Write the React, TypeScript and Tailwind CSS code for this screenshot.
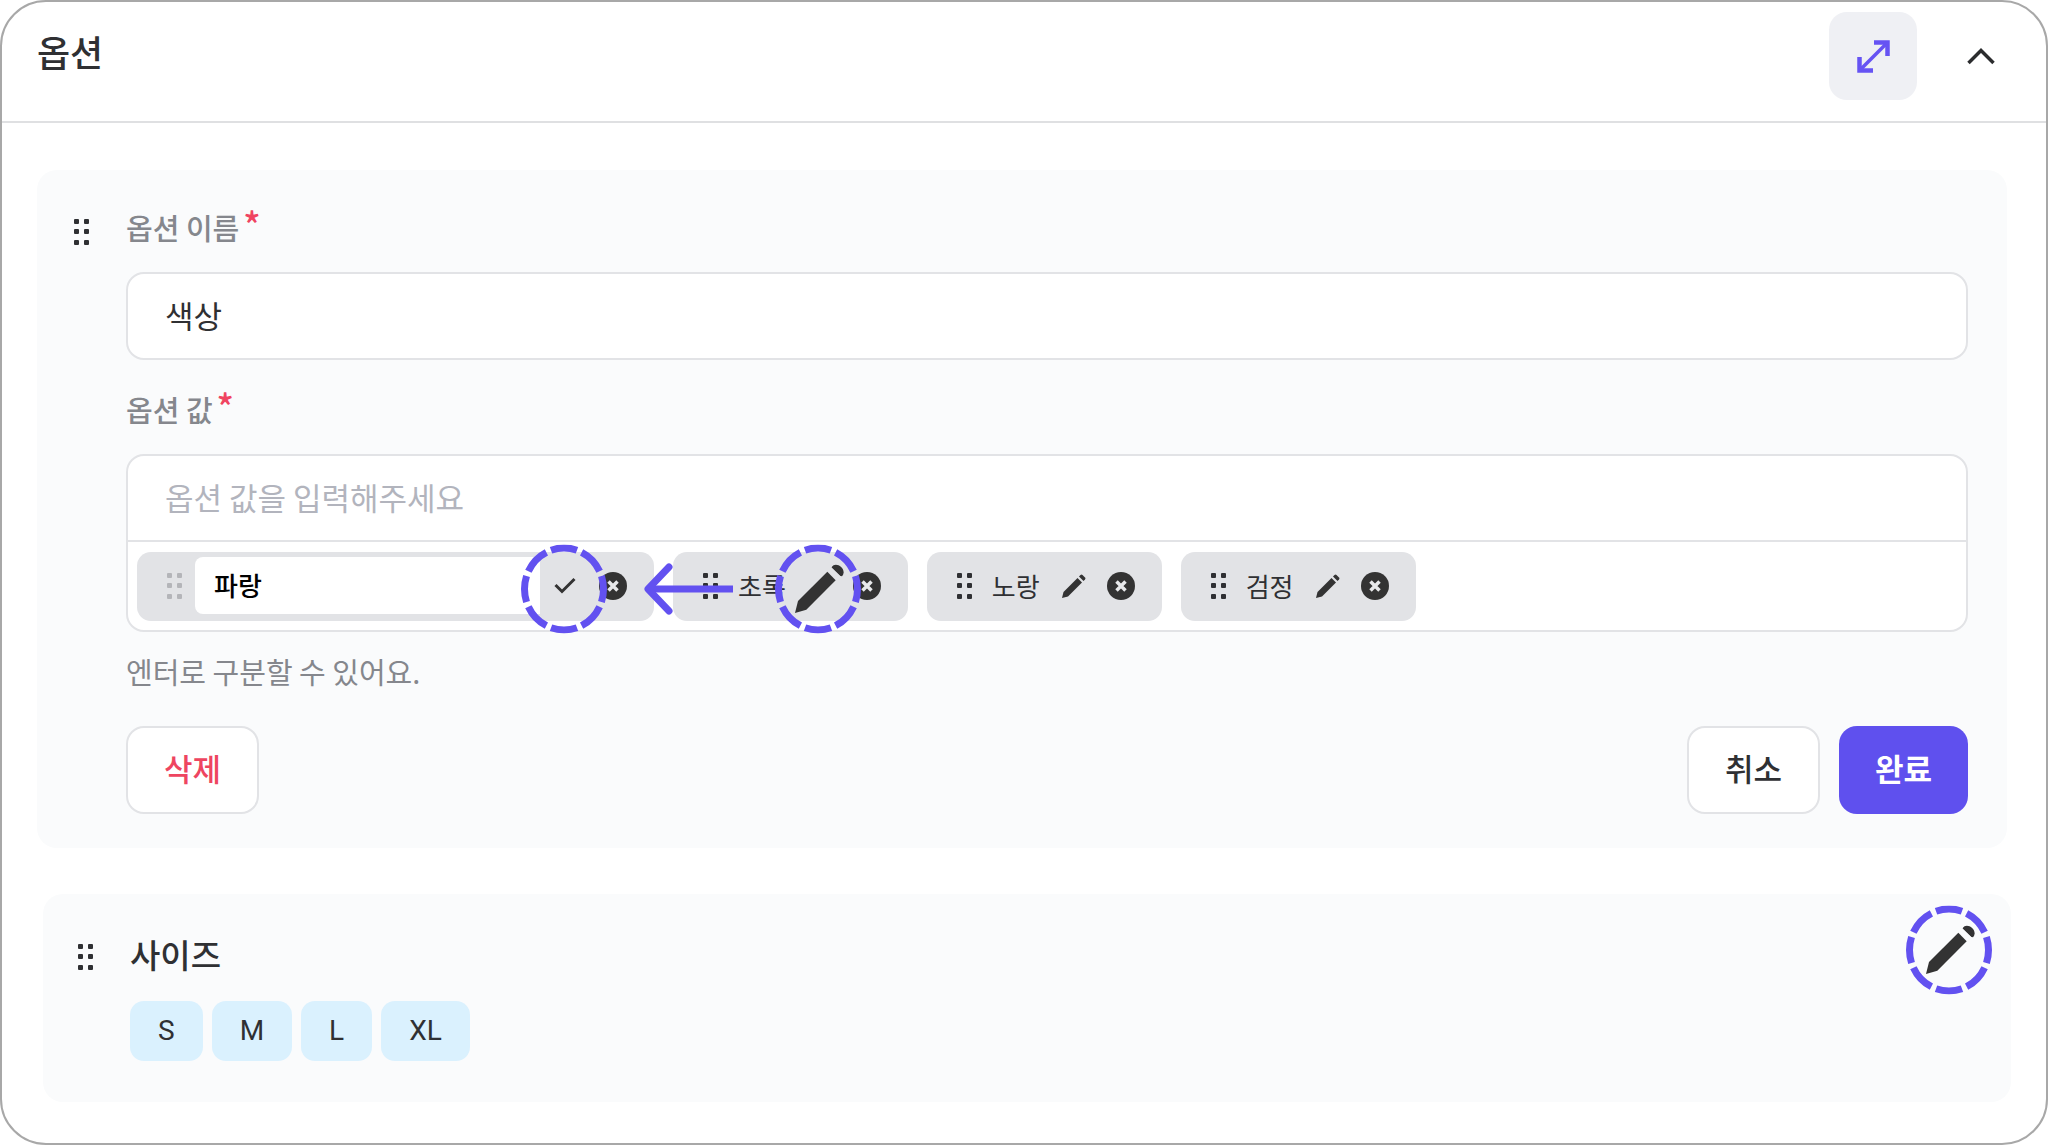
import type { ReactNode } from "react";

function Grip({ className = "text-[#2f3033]" }: { className?: string }) {
  return (
    <svg viewBox="0 0 15 28" className={`h-[28px] w-[15px] shrink-0 ${className}`} fill="currentColor" aria-hidden="true">
      {[1, 11, 22].map((y) => (
        <g key={y}>
          <rect x="0" y={y} width="5" height="5" rx="1" />
          <rect x="10" y={y} width="5" height="5" rx="1" />
        </g>
      ))}
    </svg>
  );
}

function Pencil({ className }: { className: string }) {
  return (
    <svg viewBox="-76 -80 156 156" className={className} fill="#333333" aria-hidden="true">
      <path d="M-67 70 L-58 34 L30 -54 L55 -28 L-33 60 Z" />
      <path d="M43 -67 A19 19 0 0 1 70 -41 Z" />
      <path d="M43 -67 C54 -88 92 -62 74 -40 L70 -41 Z" />
    </svg>
  );
}

function SmallPencil() {
  return (
    <svg viewBox="0 0 24 24" className="h-[24px] w-[24px]" fill="#333333" aria-hidden="true">
      <path d="M0 24 L1.5 18 L15.5 4 L20 8.500 L6 22.500 Z" />
      <path d="M17 2.500 L18.500 1 Q19.500 0 20.500 1 L23 3.500 Q24 4.500 23 5.500 L21.500 7 Z" />
    </svg>
  );
}

function Ring() {
  return (
    <svg
      viewBox="0 0 86 89"
      className="pointer-events-none absolute top-1/2 left-1/2 z-10 h-[89px] w-[86px] max-w-none -translate-x-1/2 -translate-y-1/2"
      fill="none"
      aria-hidden="true"
    >
      <ellipse
        cx="43"
        cy="44.500"
        rx="39.500"
        ry="41"
        stroke="#6251f0"
        strokeWidth="7"
        pathLength={80}
        strokeDasharray="8.4 1.6"
        strokeDashoffset="4.2"
      />
    </svg>
  );
}

function RemoveButton({ name, className }: { name: string; className: string }) {
  return (
    <button type="button" aria-label={`${name} 삭제`} className={`shrink-0 ${className}`}>
      <svg viewBox="0 0 28 28" className="h-[28px] w-[28px]" aria-hidden="true">
        <circle cx="14" cy="14" r="14" fill="#333333" />
        <path d="M9.500 9.500 L18.500 18.500 M18.500 9.500 L9.500 18.500" stroke="#e8e9eb" strokeWidth="3.500" />
      </svg>
    </button>
  );
}

function Chip({ name, highlighted = false }: { name: string; highlighted?: boolean }) {
  return (
    <li className="relative flex h-[69px] items-center rounded-[14px] bg-[#e2e3e6] pr-[27px] pb-[2px] pl-[30px]">
      <Grip />
      <span className="ml-[20px] text-[26px] leading-[38px] text-[#2f3033]">{name}</span>
      <button type="button" aria-label={`${name} 수정`} className="relative ml-[22px] h-[24px] w-[24px] shrink-0">
        {highlighted ? (
          <span className="absolute top-[15px] left-[10px]">
            <Ring />
            <Pencil className="absolute h-[52px] w-[52px] max-w-none -translate-x-1/2 -translate-y-1/2" />
          </span>
        ) : (
          <SmallPencil />
        )}
      </button>
      <RemoveButton name={name} className="ml-[21px]" />
      {highlighted && (
        <svg viewBox="0 0 90 52" className="pointer-events-none absolute top-[11px] -left-[30px] h-[52px] w-[90px]" fill="none" stroke="#6251f0" strokeWidth="7" aria-hidden="true">
          <path d="M90 26 H5" />
          <path d="M26 4 L5 26 L26 48" strokeLinecap="round" strokeLinejoin="round" />
        </svg>
      )}
    </li>
  );
}

function FieldLabel({ htmlFor, children }: { htmlFor: string; children: ReactNode }) {
  return (
    <label htmlFor={htmlFor} className="flex text-[29px] leading-[42px] font-medium text-[#85878d]">
      {children}
      <span className="-mt-[4px] ml-[4px] text-[36px] leading-[42px] text-[#f04461]">*</span>
    </label>
  );
}

const sizes = ["S", "M", "L", "XL"];

export default function App() {
  return (
    <main className="min-h-screen w-full rounded-[46px] border-2 border-[#a8a8a8] bg-white font-['Noto_Sans_CJK_KR',sans-serif] text-[#2f3033]">
      <header className="flex h-[121px] items-start justify-between border-b-2 border-[#dfe0e2] pt-[10px] pr-[51px] pl-[35px]">
        <h1 className="pt-[13px] text-[36px] leading-[52px] font-medium">옵션</h1>
        <div className="flex items-center gap-[50px]">
          <button type="button" aria-label="확대" className="flex h-[88px] w-[88px] items-center justify-center rounded-[18px] bg-[#eff0f4]">
            <svg viewBox="0 0 33 33" className="h-[33px] w-[33px]" aria-hidden="true">
              <g fill="none" stroke="#6653f3">
                <path d="M17 2.500 H30.500 V16 M2.500 17 V30.500 H16" strokeWidth="4.500" />
                <path d="M3 30 L30 3" strokeWidth="3.500" />
              </g>
              <path d="M24 2 H31 V9 Z M2 24 V31 H9 Z" fill="#6653f3" />
            </svg>
          </button>
          <button type="button" aria-label="접기">
            <svg viewBox="0 0 28 18" className="h-[18px] w-[28px]" fill="none" stroke="#2b2c2e" strokeWidth="3.500" aria-hidden="true">
              <path d="M1.500 16 L14 3.500 L26.500 16" />
            </svg>
          </button>
        </div>
      </header>

      <section className="mt-[47px] mr-[39px] ml-[35px] flex rounded-[20px] bg-[#fafbfc] pt-[36px] pr-[39px] pb-[34px] pl-[37px]">
        <button type="button" aria-label="옵션 순서 변경" className="mt-[12px] h-[28px] shrink-0">
          <Grip />
        </button>
        <form className="ml-[37px] min-w-0 flex-1">
          <FieldLabel htmlFor="option-name">옵션 이름</FieldLabel>
          <input
            id="option-name"
            defaultValue="색상"
            className="mt-[24px] block h-[88px] w-full rounded-[18px] border-2 border-[#e2e3e6] bg-white px-[37px] pb-[4px] text-[31px] outline-none"
          />
          <div className="mt-[28px]">
            <FieldLabel htmlFor="option-value">옵션 값</FieldLabel>
          </div>
          <div className="mt-[24px] rounded-[18px] border-2 border-[#e2e3e6] bg-white">
            <input
              id="option-value"
              placeholder="옵션 값을 입력해주세요"
              className="block h-[86px] w-full rounded-t-[16px] border-b-2 border-[#e2e3e6] bg-transparent px-[37px] pb-[4px] text-[31px] outline-none placeholder:text-[#b2b4bd]"
            />
            <ul className="flex flex-wrap gap-[19px] px-[9px] pt-[10px] pb-[9px]">
              <li className="flex h-[69px] items-center rounded-[14px] bg-[#e2e3e6] pr-[27px] pb-[2px] pl-[30px]">
                <Grip className="text-[#b4b5b9]" />
                <input
                  aria-label="옵션 값 수정"
                  defaultValue="파랑"
                  className="ml-[13px] h-[57px] w-[345px] rounded-l-[8px] bg-white px-[19px] pb-[2px] text-[26px] font-medium text-black outline-none"
                />
                <button type="button" aria-label="확인" className="relative ml-[14px] h-[24px] w-[22px] shrink-0">
                  <svg viewBox="0 0 22 24" className="h-[24px] w-[22px]" fill="none" stroke="#333333" strokeWidth="3" aria-hidden="true">
                    <path d="M1.500 11 L8 17.500 L20.500 5" />
                  </svg>
                  <span className="absolute top-[15px] left-[10px]">
                    <Ring />
                  </span>
                </button>
                <RemoveButton name="파랑" className="ml-[23px]" />
              </li>
              <Chip name="초록" highlighted />
              <Chip name="노랑" />
              <Chip name="검정" />
            </ul>
          </div>
          <p className="mt-[18px] text-[29px] leading-[42px] text-[#85878d]">엔터로 구분할 수 있어요.</p>
          <div className="mt-[34px] flex gap-[19px] text-[31px] font-medium">
            <button type="button" className="mr-auto h-[88px] rounded-[18px] border-2 border-[#e2e3e6] bg-white px-[36px] pb-[4px] text-[#ee4560]">
              삭제
            </button>
            <button type="button" className="h-[88px] rounded-[18px] border-2 border-[#e2e3e6] bg-white px-[36px] pb-[4px]">
              취소
            </button>
            <button type="button" className="h-[88px] rounded-[18px] bg-[#5f50ee] px-[36px] pb-[4px] font-bold text-white">
              완료
            </button>
          </div>
        </form>
      </section>

      <section className="mt-[46px] mr-[35px] ml-[41px] flex items-start rounded-[20px] bg-[#fafbfc] pl-[35px]">
        <button type="button" aria-label="사이즈 순서 변경" className="mt-[49px] h-[28px] shrink-0">
          <Grip />
        </button>
        <div className="ml-[37px] flex-1 pt-[35px] pb-[41px]">
          <h2 className="text-[33px] leading-[50px] font-medium">사이즈</h2>
          <ul className="mt-[22px] flex gap-[9px]">
            {sizes.map((size) => (
              <li
                key={size}
                className="flex h-[60px] items-center rounded-[14px] bg-[#daf1fe] px-[28px] font-['Roboto','Noto_Sans_CJK_KR',sans-serif] text-[28px]"
              >
                {size}
              </li>
            ))}
          </ul>
        </div>
        <button type="button" aria-label="사이즈 수정" className="relative mt-[11px] mr-[19px] flex h-[89px] w-[86px] items-center justify-center">
          <Ring />
          <Pencil className="h-[52px] w-[52px]" />
        </button>
      </section>
    </main>
  );
}
